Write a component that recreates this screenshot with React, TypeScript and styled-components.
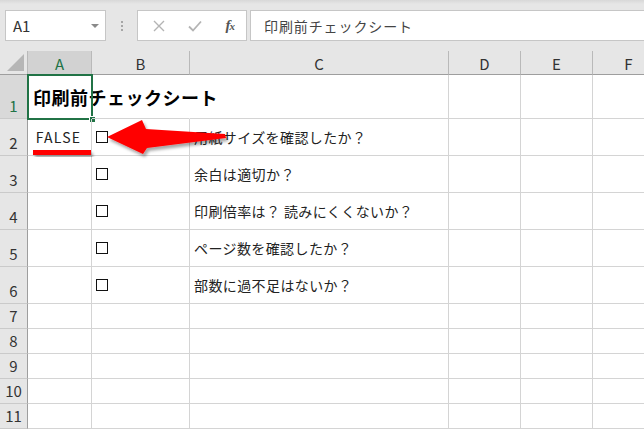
import React from 'react';
import styled, { createGlobalStyle } from 'styled-components';

const GlobalStyle = createGlobalStyle`
  html, body {
    margin: 0;
    padding: 0;
    background: #ffffff;
    overflow: hidden;
  }
  body {
    font-family: "Noto Sans CJK JP", "Noto Sans", sans-serif;
  }
`;

const columns = ['A', 'B', 'C', 'D', 'E', 'F'];

const checks = [
  '用紙サイズを確認したか？',
  '余白は適切か？',
  '印刷倍率は？ 読みにくくないか？',
  'ページ数を確認したか？',
  '部数に過不足はないか？',
];

function App() {
  return (
    <Page>
      <GlobalStyle />
      <FormulaBar>
        <NameBox>
          <span>A1</span>
          <Caret />
        </NameBox>
        <Grip>
          <i />
          <i />
          <i />
        </Grip>
        <FxGroup>
          <svg width="12" height="12" viewBox="0 0 12 12">
            <path d="M1 1 L11 11 M11 1 L1 11" stroke="#b4b4b4" strokeWidth="1.4" fill="none" />
          </svg>
          <svg width="14" height="12" viewBox="0 0 14 12">
            <path d="M1 6.5 L5 10.5 L13 1.5" stroke="#b4b4b4" strokeWidth="1.8" fill="none" />
          </svg>
          <FxLabel>
            f<small>x</small>
          </FxLabel>
        </FxGroup>
        <FormulaInput>印刷前チェックシート</FormulaInput>
      </FormulaBar>

      <Sheet>
        <Corner />
        {columns.map((c) => (
          <ColHead key={c} $selected={c === 'A'}>
            {c}
          </ColHead>
        ))}

        <RowHead $selected>1</RowHead>
        <Cell $open>
          <Title>印刷前チェックシート</Title>
          <Selection>
            <Handle />
          </Selection>
        </Cell>
        <Cell $open />
        <Cell />
        <Cell />
        <Cell />
        <Cell />

        {checks.map((text, i) => (
          <React.Fragment key={text}>
            <RowHead>{i + 2}</RowHead>
            <Cell $center>{i === 0 && <BoolValue>FALSE</BoolValue>}</Cell>
            <Cell>
              <CheckBox />
            </Cell>
            <Cell>
              <CellText>{text}</CellText>
            </Cell>
            <Cell />
            <Cell />
            <Cell />
          </React.Fragment>
        ))}

        {[7, 8, 9, 10, 11].map((n) => (
          <React.Fragment key={n}>
            <RowHead>{n}</RowHead>
            <Cell />
            <Cell />
            <Cell />
            <Cell />
            <Cell />
            <Cell />
          </React.Fragment>
        ))}

        <Markup width="210" height="56" viewBox="28 110 210 56">
          <defs>
            <filter id="soft" x="-20%" y="-40%" width="140%" height="180%">
              <feDropShadow dx="2" dy="3" stdDeviation="1.6" floodColor="#000" floodOpacity="0.35" />
            </filter>
          </defs>
          <rect x="33" y="150" width="58" height="5" fill="#ff0000" filter="url(#soft)" />
          <polygon
            points="107,137 142,120 146,129 225,134 226,138 147,148 143,154"
            fill="#ff0000"
            filter="url(#soft)"
          />
        </Markup>
      </Sheet>
    </Page>
  );
}

const Page = styled.div`
  width: 644px;
  height: 429px;
  overflow: hidden;
  background: #ffffff;
`;

const FormulaBar = styled.div`
  height: 51px;
  box-sizing: border-box;
  padding: 10px 0 10px 5px;
  display: flex;
  align-items: stretch;
  background: linear-gradient(#d8d8d8 0px, #e6e6e6 4px, #e6e6e6 100%);
`;

const NameBox = styled.div`
  width: 101px;
  box-sizing: border-box;
  border: 1px solid #c6c6c6;
  background: #ffffff;
  display: flex;
  align-items: center;
  justify-content: space-between;
  padding: 0 6px 0 7px;
  font-size: 15px;
  color: #333333;
`;

const Caret = styled.span`
  width: 0;
  height: 0;
  border-left: 4px solid transparent;
  border-right: 4px solid transparent;
  border-top: 4px solid #8a8a8a;
`;

const Grip = styled.div`
  width: 31px;
  display: flex;
  flex-direction: column;
  align-items: center;
  justify-content: center;
  gap: 2px;

  i {
    width: 2px;
    height: 2px;
    background: #a6a6a6;
  }
`;

const FxGroup = styled.div`
  width: 110px;
  box-sizing: border-box;
  border: 1px solid #c6c6c6;
  background: #ffffff;
  display: flex;
  align-items: center;
  justify-content: space-between;
  padding: 0 12px 0 15px;
`;

const FxLabel = styled.span`
  font-family: "Liberation Serif", serif;
  font-style: italic;
  font-weight: bold;
  font-size: 15px;
  color: #555555;
  letter-spacing: -1px;

  small {
    font-size: 11px;
  }
`;

const FormulaInput = styled.div`
  flex: 1;
  margin-left: 3px;
  box-sizing: border-box;
  border: 1px solid #c6c6c6;
  border-right: none;
  background: #ffffff;
  display: flex;
  align-items: center;
  padding-left: 13px;
  font-size: 14px;
  letter-spacing: 0.9px;
  color: #444444;
`;

const Sheet = styled.div`
  position: relative;
  display: grid;
  grid-template-columns: 28px 64px 98px 259px 72px 72px 72px;
  grid-template-rows: 24px 44px repeat(5, 37px) repeat(5, 25px);
  width: 665px;
  background: #ffffff;
`;

const Corner = styled.div`
  position: relative;
  background: #e6e6e6;
  box-sizing: border-box;
  border-right: 1px solid #b9b9b9;
  border-bottom: 1px solid #9e9e9e;

  &::after {
    content: '';
    position: absolute;
    right: 3px;
    bottom: 3px;
    width: 0;
    height: 0;
    border-left: 17px solid transparent;
    border-bottom: 17px solid #b6b6b6;
  }
`;

const ColHead = styled.div<{ $selected?: boolean }>`
  box-sizing: border-box;
  display: flex;
  align-items: center;
  justify-content: center;
  background: ${(p) => (p.$selected ? '#d2d2d2' : '#e6e6e6')};
  color: ${(p) => (p.$selected ? '#217346' : '#333333')};
  border-right: 1px solid #b9b9b9;
  border-bottom: 1px solid #9e9e9e;
  font-size: 15px;
  padding-top: 1px;
`;

const RowHead = styled.div<{ $selected?: boolean }>`
  box-sizing: border-box;
  display: flex;
  align-items: flex-end;
  justify-content: center;
  padding-bottom: 2px;
  background: ${(p) => (p.$selected ? '#d9d9d9' : '#e6e6e6')};
  color: ${(p) => (p.$selected ? '#217346' : '#333333')};
  border-right: 1px solid #9e9e9e;
  border-bottom: 1px solid #cacaca;
  font-size: 15px;
  line-height: 20px;
`;

const Cell = styled.div<{ $open?: boolean; $center?: boolean }>`
  position: relative;
  box-sizing: border-box;
  display: flex;
  align-items: center;
  justify-content: ${(p) => (p.$center ? 'center' : 'flex-start')};
  border-right: 1px solid ${(p) => (p.$open ? 'transparent' : '#d4d4d4')};
  border-bottom: 1px solid #d4d4d4;
  min-width: 0;
`;

const Title = styled.span`
  padding-left: 5px;
  white-space: nowrap;
  font-size: 18px;
  font-weight: bold;
  letter-spacing: 0.5px;
  color: #000000;
`;

const Selection = styled.div`
  position: absolute;
  left: -1px;
  top: -1px;
  width: 66px;
  height: 46px;
  box-sizing: border-box;
  border: 2px solid #217346;
  pointer-events: none;
`;

const Handle = styled.span`
  position: absolute;
  right: -5px;
  bottom: -5px;
  width: 5px;
  height: 5px;
  background: #217346;
  border: 1px solid #ffffff;
`;

const BoolValue = styled.span`
  font-size: 14px;
  letter-spacing: 1.2px;
  color: #222222;
  padding-right: 2px;
`;

const CheckBox = styled.span`
  margin-left: 4px;
  width: 12px;
  height: 12px;
  box-sizing: border-box;
  border: 1.5px solid #111111;
`;

const CellText = styled.span`
  padding-left: 4px;
  white-space: nowrap;
  font-size: 14px;
  letter-spacing: 0.4px;
  color: #222222;
`;

const Markup = styled.svg`
  position: absolute;
  left: 28px;
  top: 59px;
  overflow: visible;
  pointer-events: none;
`;

export default App;
